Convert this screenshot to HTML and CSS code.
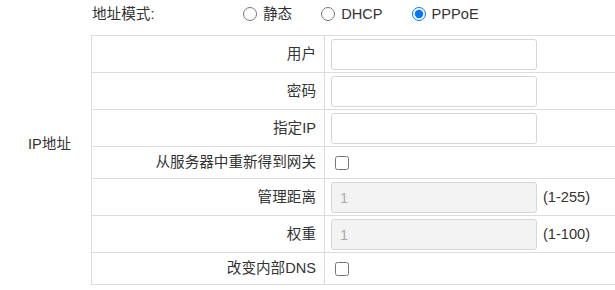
FILE: index.html
```html
<!DOCTYPE html>
<html lang="zh-CN">
<head>
    <meta charset="UTF-8">
    <title>IP地址</title>
    <link rel="stylesheet" href="styles.css">
</head>
<body>

    <table class="layout">
        <tr>
            <td class="side">IP地址</td>
            <td class="main">
                <!-- address mode -->
                <div class="mode">
                    <span class="mode-label">地址模式:</span>
                    <label class="opt"><input type="radio" name="mode">静态</label>
                    <label class="opt"><input type="radio" name="mode">DHCP</label>
                    <label class="opt"><input type="radio" name="mode" checked>PPPoE</label>
                </div>

                <table class="grid">
                    <tr>
                        <td class="name">用户</td>
                        <td class="field"><input type="text" class="txt"></td>
                    </tr>
                    <tr>
                        <td class="name">密码</td>
                        <td class="field"><input type="password" class="txt"></td>
                    </tr>
                    <tr>
                        <td class="name">指定IP</td>
                        <td class="field"><input type="text" class="txt"></td>
                    </tr>
                    <tr>
                        <td class="name">从服务器中重新得到网关</td>
                        <td class="field"><input type="checkbox" class="chk"></td>
                    </tr>
                    <tr>
                        <td class="name">管理距离</td>
                        <td class="field"><input type="text" class="txt" value="1" disabled><span class="range">(1-255)</span></td>
                    </tr>
                    <tr>
                        <td class="name">权重</td>
                        <td class="field"><input type="text" class="txt" value="1" disabled><span class="range">(1-100)</span></td>
                    </tr>
                    <tr>
                        <td class="name">改变内部DNS</td>
                        <td class="field"><input type="checkbox" class="chk"></td>
                    </tr>
                </table>
            </td>
        </tr>
    </table>

</body>
</html>
```

FILE: styles.css
```css
html, body {
    overflow: hidden;
}

body {
    margin: 0;
    font-family: 'Liberation Sans', 'Noto Sans CJK SC', sans-serif;
    font-size: 14.6px;
    color: #333;
    background: #fff;
}

.layout {
    border-collapse: collapse;
    width: 615px;
}

.side {
    width: 63px;
    padding: 0 0 0 28px;
    vertical-align: middle;
    white-space: nowrap;
}

.main {
    padding: 0;
    vertical-align: top;
}

.mode {
    display: flex;
    align-items: center;
    height: 20px;
    line-height: 20px;
    padding: 4px 0 11px 1px;
    white-space: nowrap;
}

.mode-label {
    width: 146px;
}

.opt {
    display: inline-flex;
    align-items: center;
    margin-right: 24px;
}

.opt input {
    width: 14px;
    height: 14px;
    margin: 0 6px 0 5px;
}

.grid {
    border-collapse: collapse;
    width: 100%;
}

.grid td {
    border: 1px solid #ddd;
}

.grid .name {
    width: 224px;
    height: 31px;
    padding: 0 8px 0 0;
    line-height: 21px;
    text-align: right;
    vertical-align: middle;
    white-space: nowrap;
}

.grid .field {
    padding: 0 6px;
    border-right: none;
    line-height: 1;
    vertical-align: middle;
    white-space: nowrap;
}

.txt {
    box-sizing: border-box;
    width: 206px;
    height: 31px;
    margin: 3px 0 2px;
    padding: 0 8px;
    border: 1px solid #d4d6dc;
    border-radius: 3px;
    font: inherit;
    color: #333;
    vertical-align: middle;
    background: #fff;
}

.txt:disabled {
    background: #f3f3f3;
    color: #aaa;
}

.range {
    margin-left: 6px;
    vertical-align: middle;
}

.chk {
    width: 14px;
    height: 14px;
    margin: 3px 3px 3px 4px;
    vertical-align: middle;
}
```
